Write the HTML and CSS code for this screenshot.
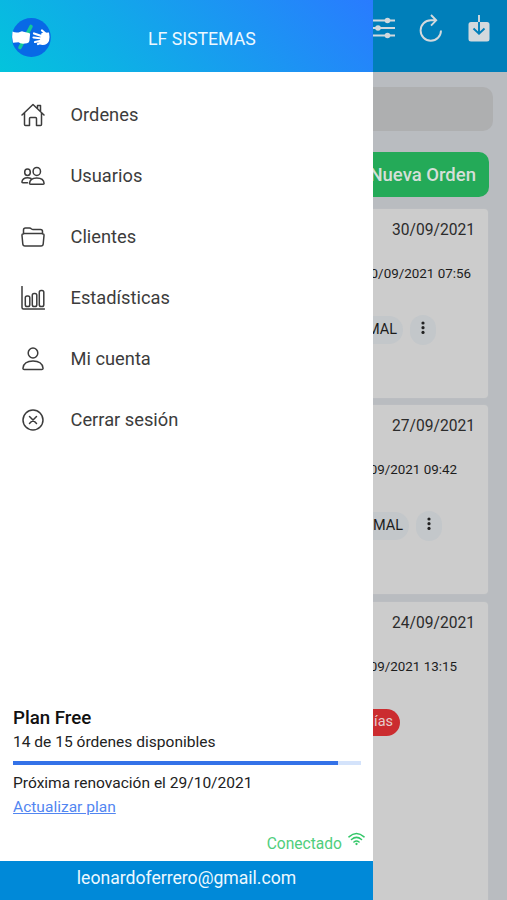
FILE: index.html
```html
<!DOCTYPE html>
<html lang="es">
<head>
<meta charset="utf-8">
<title>LF Sistemas</title>
<link rel="stylesheet" href="styles.css">
</head>
<body>
<main class="page">
  <header class="toolbar">
    <svg class="tool" viewBox="0 0 24 24"><path d="M0 4.500h24M0 12h24M0 19.500h24"/><g class="solid"><circle cx="16.500" cy="4.500" r="2.800"/><circle cx="7" cy="12" r="2.800"/><circle cx="16.500" cy="19.500" r="2.800"/></g></svg>
    <svg class="tool refresh" viewBox="0 0 24 28"><path d="M22 16.500A10.200 10.200 0 1 1 11.800 6.300H17M12 1l5.200 5.300L12 11.600"/></svg>
    <svg class="tool download" viewBox="0 0 24 28"><path d="M4 8h16A2.500 2.500 0 0 1 22.500 10.500v14.500a2.500 2.500 0 0 1-2.500 2.500H4a2.500 2.500 0 0 1-2.500-2.500V10.500a2.500 2.500 0 0 1 2.500-2.500z" class="solid"/><path d="M12 1v8"/><path class="arrow" d="M12 8v11.500M6.500 14.500l5.500 5.300 5.500-5.300"/></svg>
  </header>
  <div class="search"></div>
  <button class="new-order">Nueva Orden</button>
  <article class="card">
    <div class="date">30/09/2021</div>
    <div class="stamp first">30/09/2021 07:56</div>
    <div class="chips first"><span class="chip">NORMAL</span><span class="chip more"><svg viewBox="0 0 4 14"><circle cx="2" cy="1" r="1.600"/><circle cx="2" cy="5.700" r="1.600"/><circle cx="2" cy="10.400" r="1.600"/></svg></span></div>
  </article>
  <article class="card">
    <div class="date">27/09/2021</div>
    <div class="stamp">27/09/2021 09:42</div>
    <div class="chips"><span class="chip">NORMAL</span><span class="chip more"><svg viewBox="0 0 4 14"><circle cx="2" cy="1" r="1.600"/><circle cx="2" cy="5.700" r="1.600"/><circle cx="2" cy="10.400" r="1.600"/></svg></span></div>
  </article>
  <article class="card last">
    <div class="date">24/09/2021</div>
    <div class="stamp">24/09/2021 13:15</div>
    <div class="chips late"><span class="chip overdue">días</span></div>
  </article>
</main>
<aside class="drawer">
  <header class="brand">
    <svg class="logo" viewBox="0 0 40 40"><circle cx="20.300" cy="19.500" r="19.500" fill="#0869e6"/><path d="M20 8.500L9 29.500" stroke="#12c99a" stroke-width="3.600" stroke-linecap="round"/><path fill="#fff" d="M1.500 13.500q4 2 8 .2 1.500-1 3 0l5.500 1.200q1.800.5 1 2.200l-.6 6q-.4 2-2.400 2.200l-4 .5q-3-.2-4.500-1.500l-5.500.4q-1.500-5.500-.5-11.200z"/><path fill="#fff" d="M30.500 15l7.500-.5q1 4.500 0 8.500-2 4-6 4-3.500.3-3.500-2.500z"/><g stroke="#fff" stroke-linecap="round" stroke-width="2.200"><path d="M35 16l-4-3.500M32 18.500l-9-3M31 20.500l-8.500-1M31 22.500l-7 1.500M32 24l-5 2"/></g></svg>
    <h1>LF SISTEMAS</h1>
  </header>
  <nav class="menu">
    <a><svg viewBox="0 0 24 24"><path d="M1 12L12 1.500 23 12M3.500 10v11.500q0 1 1 1H8.500v-7q0-1 1-1h5q1 0 1 1v7h4q1 0 1-1V10M16.500 5.500V2.500h3v6.200"/></svg>Ordenes</a>
    <a><svg viewBox="0 0 24 24"><ellipse cx="15.800" cy="7.400" rx="3.700" ry="4"/><path d="M8.500 19.500q.3-5.500 7.300-5.500t7.300 5.500q0 .7-1 .7H9.500q-1 0-1-.7z"/><ellipse cx="6.500" cy="8.200" rx="2.800" ry="3.200"/><path d="M10 14.500q-1.500-.8-3.500-.8-5 0-5.600 4.300 0 .7.800.7h4.800"/></svg>Usuarios</a>
    <a><svg viewBox="0 0 24 24"><path d="M2.500 9V5q0-2 2-2h4q1 0 1.800.8.800.7 1.800.7h7.400q2 0 2 2V9M3 8.500h18q2.200 0 2 2l-.8 8.500q-.2 2-2.200 2H4q-2 0-2.200-2L1 10.500q-.2-2 2-2z"/></svg>Clientes</a>
    <a><svg viewBox="0 0 24 24"><path d="M1 .5v21q0 1.500 1.500 1.500h21"/><rect x="4.300" y="10" width="4.500" height="10.500" rx="1.800"/><rect x="11.300" y="7.500" width="4.500" height="13" rx="1.800"/><rect x="18.300" y="4.500" width="4.500" height="16" rx="1.800"/></svg>Estadísticas</a>
    <a><svg viewBox="0 0 24 24"><ellipse cx="12" cy="6" rx="4.800" ry="5"/><path d="M2 21q1-7 10-7t10 7q.2 1.500-1.300 1.500H3.300Q1.800 22.500 2 21z"/></svg>Mi cuenta</a>
    <a><svg viewBox="0 0 24 24"><circle cx="12" cy="12" r="10"/><path d="M8.500 8.500l7 7M15.500 8.500l-7 7"/></svg>Cerrar sesión</a>
  </nav>
  <section class="plan">
    <h2>Plan Free</h2>
    <p>14 de 15 órdenes disponibles</p>
    <div class="track"><div class="fill"></div></div>
    <p class="renewal">Próxima renovación el 29/10/2021</p>
    <p class="upgrade"><a>Actualizar plan</a></p>
  </section>
  <div class="status"><span>Conectado</span><svg viewBox="0 0 18 14"><path d="M1 4.700q8-7 16 0M3.700 7.500q5.300-4.500 10.600 0M6.300 10.200q2.700-2.200 5.400 0"/><circle cx="9" cy="12.300" r="1.200"/></svg></div>
  <footer class="account">leonardoferrero@gmail.com</footer>
</aside>
</body>
</html>
```
FILE: styles.css
```css
* { box-sizing: border-box; }
body { margin: 0; height: 900px; overflow: hidden; position: relative; font-family: Roboto, sans-serif; color: #222; }
h1, h2, p { margin: 0; font-weight: 400; }
svg { display: block; fill: none; }

.page { height: 900px; overflow: hidden; background: #b9bcc0; display: flex; flex-direction: column; }
.toolbar { height: 72px; flex: none; background: #007fba; display: flex; justify-content: flex-end; padding: 14px 16px 0 0; }
.tool { width: 24px; height: 28px; stroke: #d3d9dd; stroke-width: 1.900; margin-left: 24px; }
.tool .solid { fill: #d3d9dd; stroke: none; }
.tool .arrow { stroke: #007fba; stroke-width: 1.900; }
.search { flex: none; height: 44px; margin: 15px 14px 0; border-radius: 10px; background: #aeafb0; }
.new-order { flex: none; align-self: flex-end; width: 140px; height: 45px; margin: 21px 18px 0 0; padding: 0 13px 0 0; border: 0; border-radius: 10px; background: #24aa58; color: #d5dfd8; font: 500 18.500px Roboto, sans-serif; text-align: right; white-space: nowrap; }
.card { flex: none; height: 189px; margin: 12px 19px 0; padding-right: 13px; border-radius: 4px; background: #cccccc; text-align: right; color: #2b2b2b; box-shadow: 0 0 2px #c2c3c5; }
.card + .card { margin-top: 7.300px; }
.card.last { height: 310px; }
.date { font-size: 15.600px; line-height: 22px; padding-top: 10px; }
.stamp { font-size: 13.400px; line-height: 18px; margin: 24px 18px 0 0; color: #1c1c1c; }
.stamp.first { margin-right: 4px; }
.chips { display: flex; justify-content: flex-end; gap: 7px; margin: 32px 33px 0 0; }
.chips.first { margin-right: 39px; }
.chip { height: 28px; margin-top: 1px; border-radius: 14px; padding: 0 6px; background: #c3c7ca; font-size: 14.500px; line-height: 28px; color: #1c1c1c; }
.chip.more { width: 26px; height: 30px; margin-top: 0; padding: 7px 11px 0; }
.more svg { width: 4px; height: 14px; fill: #222; overflow: visible; }
.late { margin: 32px 75px 0 0; }
.overdue { background: #cb2c2f; color: #e5cccc; height: 27px; line-height: 26px; padding-right: 7px; }

.drawer { position: absolute; left: 0; top: 0; width: 373px; height: 900px; background: #fff; display: flex; flex-direction: column; }
.brand { height: 72px; flex: none; display: flex; align-items: center; padding: 3px 0 0 11px; background: linear-gradient(45deg, #03c4dc 0%, #297bff 100%); }
.logo { width: 40px; height: 40px; }
.brand h1 { margin-left: 97px; margin-top: 3px; color: #edf8ff; font-size: 17.700px; }
.menu { padding-top: 12px; }
.menu a { display: flex; align-items: center; height: 61px; padding-left: 21px; gap: 25.500px; font-size: 18.300px; color: #3c3c3c; }
.menu svg { width: 24px; height: 24px; stroke: #3c3c3c; stroke-width: 1.500; stroke-linejoin: round; stroke-linecap: round; }
.plan { margin-top: auto; padding: 0 12px 0 13px; font-size: 15.550px; color: #222; }
.plan h2 { font-size: 18.700px; font-weight: 500; line-height: 24px; color: #111; }
.plan p { line-height: 24px; }
.track { height: 4px; margin-top: 7px; background: #d4e3fb; }
.fill { width: 93.300%; height: 4px; background: #3472e8; }
.plan .renewal { margin-top: 6px; }
.upgrade a { color: #5286f1; text-decoration: underline; }
.status { display: flex; justify-content: flex-end; gap: 6px; height: 42px; padding: 15px 8px 0 0; color: #4fce7c; font-size: 15.600px; line-height: 20px; }
.status svg { width: 17px; height: 14px; stroke: #33c768; stroke-width: 1.600; stroke-linecap: round; margin-top: -2px; }
.status circle { fill: #33c768; stroke: none; }
.account { height: 39px; flex: none; background: #0089d8; color: #edf8ff; text-align: center; font-size: 17.600px; line-height: 34px; }
```
